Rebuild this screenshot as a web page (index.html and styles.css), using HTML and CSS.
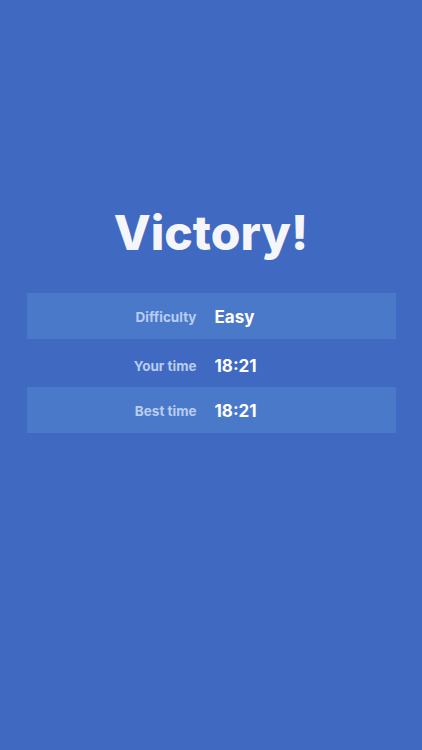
FILE: index.html
```html
<!DOCTYPE html>
<html>
<head>
<meta charset="utf-8">
<link rel="stylesheet" href="styles.css">
</head>
<body>
<main class="screen">
  <h1 class="title">Victory!</h1>
  <div class="stats">
    <div class="row shaded"><span class="label">Difficulty</span><span class="value">Easy</span></div>
    <div class="row middle"><span class="label">Your time</span><span class="value">18:21</span></div>
    <div class="row shaded"><span class="label">Best time</span><span class="value">18:21</span></div>
  </div>
</main>
</body>
</html>
```
FILE: styles.css
```css
html, body { margin: 0; padding: 0; }
body {
  background: #4069c2;
  font-family: "Inter", "Noto Sans", sans-serif;
  width: 422px;
  height: 750px;
  overflow: hidden;
}
.screen {
  display: flex;
  flex-direction: column;
  align-items: center;
  padding-top: 200px;
}
.title {
  margin: 0;
  color: #f4f6fb;
  font-size: 48px;
  font-weight: 800;
  line-height: 66px;
}
.stats {
  margin-top: 27px;
  width: 369px;
  display: flex;
  flex-direction: column;
}
.row {
  display: grid;
  grid-template-columns: 170px 1fr;
  column-gap: 18px;
  align-items: center;
  height: 46px;
  padding-top: 2px;
  box-sizing: border-box;
}
.middle { height: 48px; padding-top: 5px; }
.shaded { background: #4b79ca; }
.label {
  text-align: right;
  color: #b8cdf0;
  font-size: 13.5px;
  font-weight: 700;
}
.value {
  color: #ffffff;
  font-size: 17px;
  font-weight: 700;
}
```
